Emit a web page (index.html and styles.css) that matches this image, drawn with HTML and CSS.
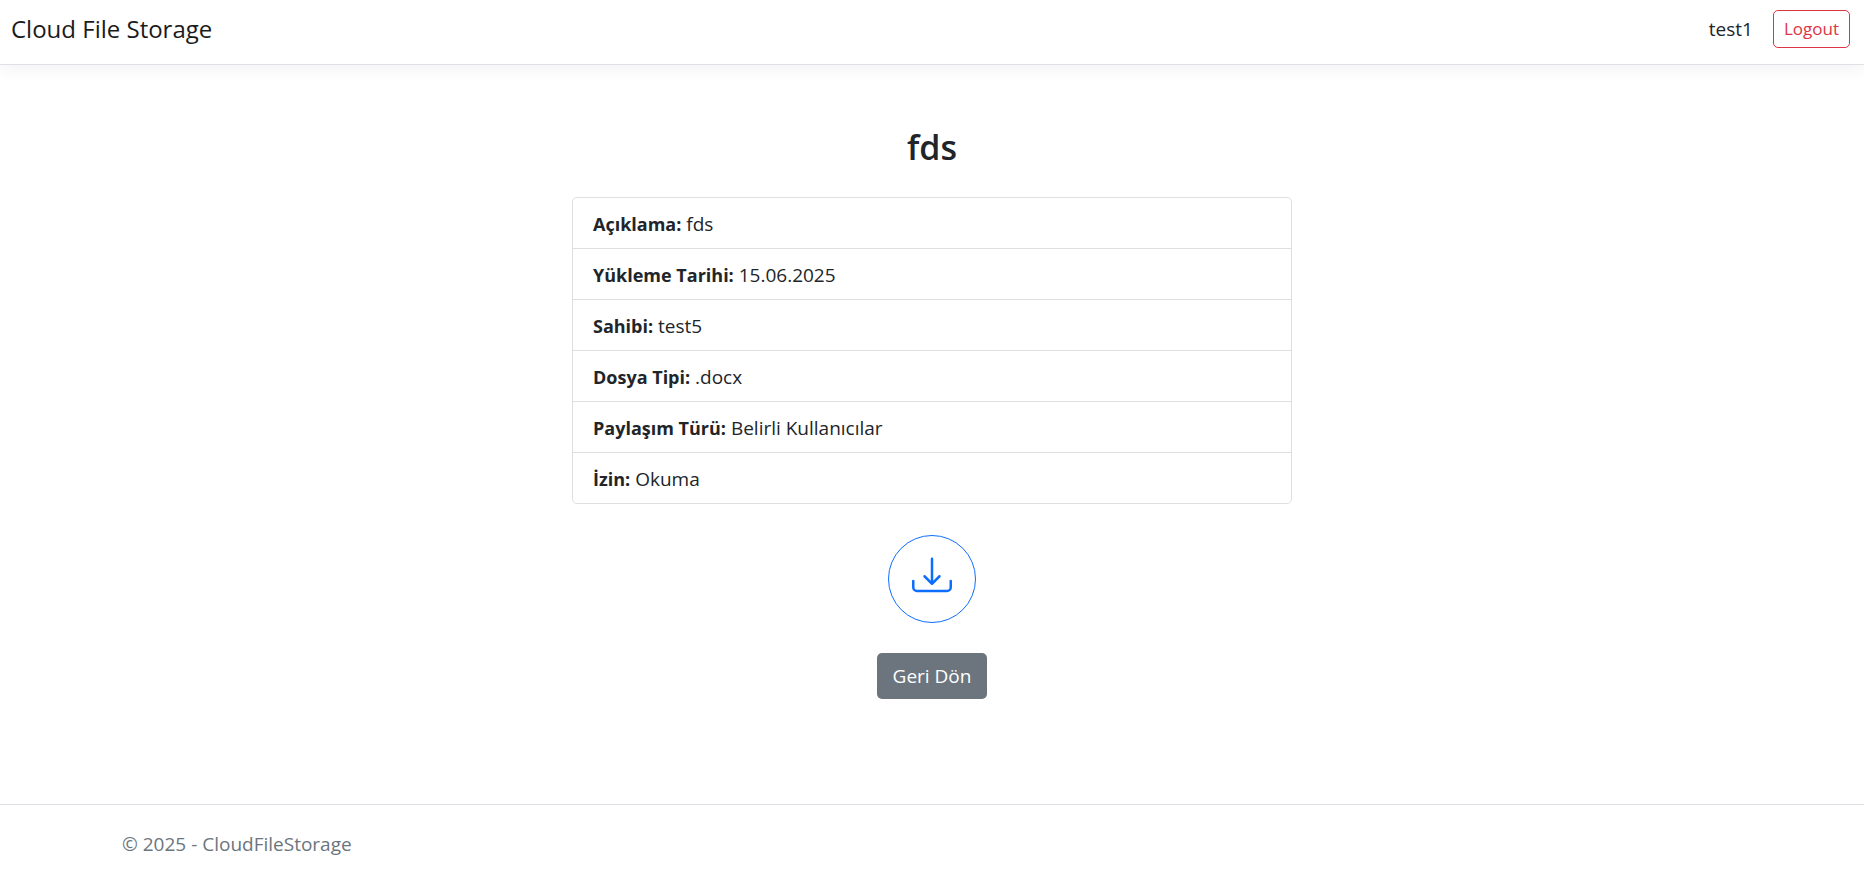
FILE: index.html
```html
<!DOCTYPE html>
<html lang="tr">
<head>
  <meta charset="utf-8">
  <meta name="viewport" content="width=device-width, initial-scale=1">
  <title>fds - CloudFileStorage</title>
  <link rel="stylesheet" href="styles.css">
</head>
<body>
  <header class="navbar">
    <a class="brand" href="#">Cloud File Storage</a>
    <div class="account">
      <span class="user">test1</span>
      <button class="btn-logout" type="button">Logout</button>
    </div>
  </header>

  <main class="content">
    <h2 class="title">fds</h2>
    <ul class="details">
      <li><strong>Açıklama:</strong> fds</li>
      <li><strong>Yükleme Tarihi:</strong> 15.06.2025</li>
      <li><strong>Sahibi:</strong> test5</li>
      <li><strong>Dosya Tipi:</strong> .docx</li>
      <li><strong>Paylaşım Türü:</strong> Belirli Kullanıcılar</li>
      <li><strong>İzin:</strong> Okuma</li>
    </ul>
    <a class="btn-download" href="#" aria-label="İndir">
      <svg class="icon" viewBox="0 0 16 16" fill="currentColor" aria-hidden="true">
        <path d="M.5 9.9a.5.5 0 0 1 .5.5v2.5a1 1 0 0 0 1 1h12a1 1 0 0 0 1-1v-2.5a.5.5 0 0 1 1 0v2.5a2 2 0 0 1-2 2H2a2 2 0 0 1-2-2v-2.5a.5.5 0 0 1 .5-.5"/>
        <path d="M7.646 11.854a.5.5 0 0 0 .708 0l3-3a.5.5 0 0 0-.708-.708L8.5 10.293V1.5a.5.5 0 0 0-1 0v8.793L5.354 8.146a.5.5 0 1 0-.708.708z"/>
      </svg>
    </a>
    <a class="btn-back" href="#">Geri Dön</a>
  </main>

  <footer class="footer">
    <div class="footer-inner">© 2025 - CloudFileStorage</div>
  </footer>
</body>
</html>
```
FILE: styles.css
```css
*,
*::before,
*::after {
  box-sizing: border-box;
}

body {
  margin: 0;
  min-height: 100vh;
  display: flex;
  flex-direction: column;
  background: #fff;
  color: #212529;
  font-family: "Segoe UI", "Open Sans", "Noto Sans", sans-serif;
  font-size: 19px;
  line-height: 30px;
}

a {
  text-decoration: none;
}

.navbar {
  display: flex;
  align-items: center;
  justify-content: space-between;
  padding: 10px 14px 16px 11px;
  border-bottom: 1px solid #dee2e6;
  box-shadow: 0 5px 15px rgba(0, 0, 0, 0.05);
}

.brand {
  color: #1b1b1b;
  font-size: 24px;
  line-height: 38px;
}

.account {
  display: flex;
  align-items: center;
  gap: 20px;
}

.btn-logout {
  padding: 4px 10px;
  border: 1px solid #dc3545;
  border-radius: 5px;
  background: transparent;
  color: #dc3545;
  font: inherit;
  font-size: 17px;
  line-height: 28px;
  cursor: pointer;
}

.content {
  flex: 1;
  display: flex;
  flex-direction: column;
  align-items: center;
  padding: 58px 15px 20px;
}

.title {
  margin: 0 0 26px;
  font-size: 34px;
  font-weight: 600;
  line-height: 48px;
}

.details {
  width: 100%;
  max-width: 720px;
  margin: 0 0 31px;
  padding: 0;
  list-style: none;
  border: 1px solid #dfdfdf;
  border-radius: 5px;
}

.details li {
  padding: 11px 20px 9px;
}

.details li + li {
  border-top: 1px solid #dfdfdf;
}

.details strong {
  font-size: 18px;
  font-weight: 700;
}

.btn-download {
  width: 88px;
  height: 88px;
  margin-bottom: 30px;
  padding-top: 19px;
  border: 1px solid #0d6efd;
  border-radius: 50%;
  color: #0d6efd;
  text-align: center;
}

.icon {
  display: block;
  width: 40px;
  height: 40px;
  margin: 0 auto;
}

.btn-back {
  padding: 8px 16px;
  border-radius: 5px;
  background: #6c757d;
  color: #fff;
}

.footer {
  border-top: 1px solid #dee2e6;
  color: #6c757d;
}

.footer-inner {
  max-width: 1650px;
  margin: 0 auto;
  padding: 24px 15px 15px;
}
```
